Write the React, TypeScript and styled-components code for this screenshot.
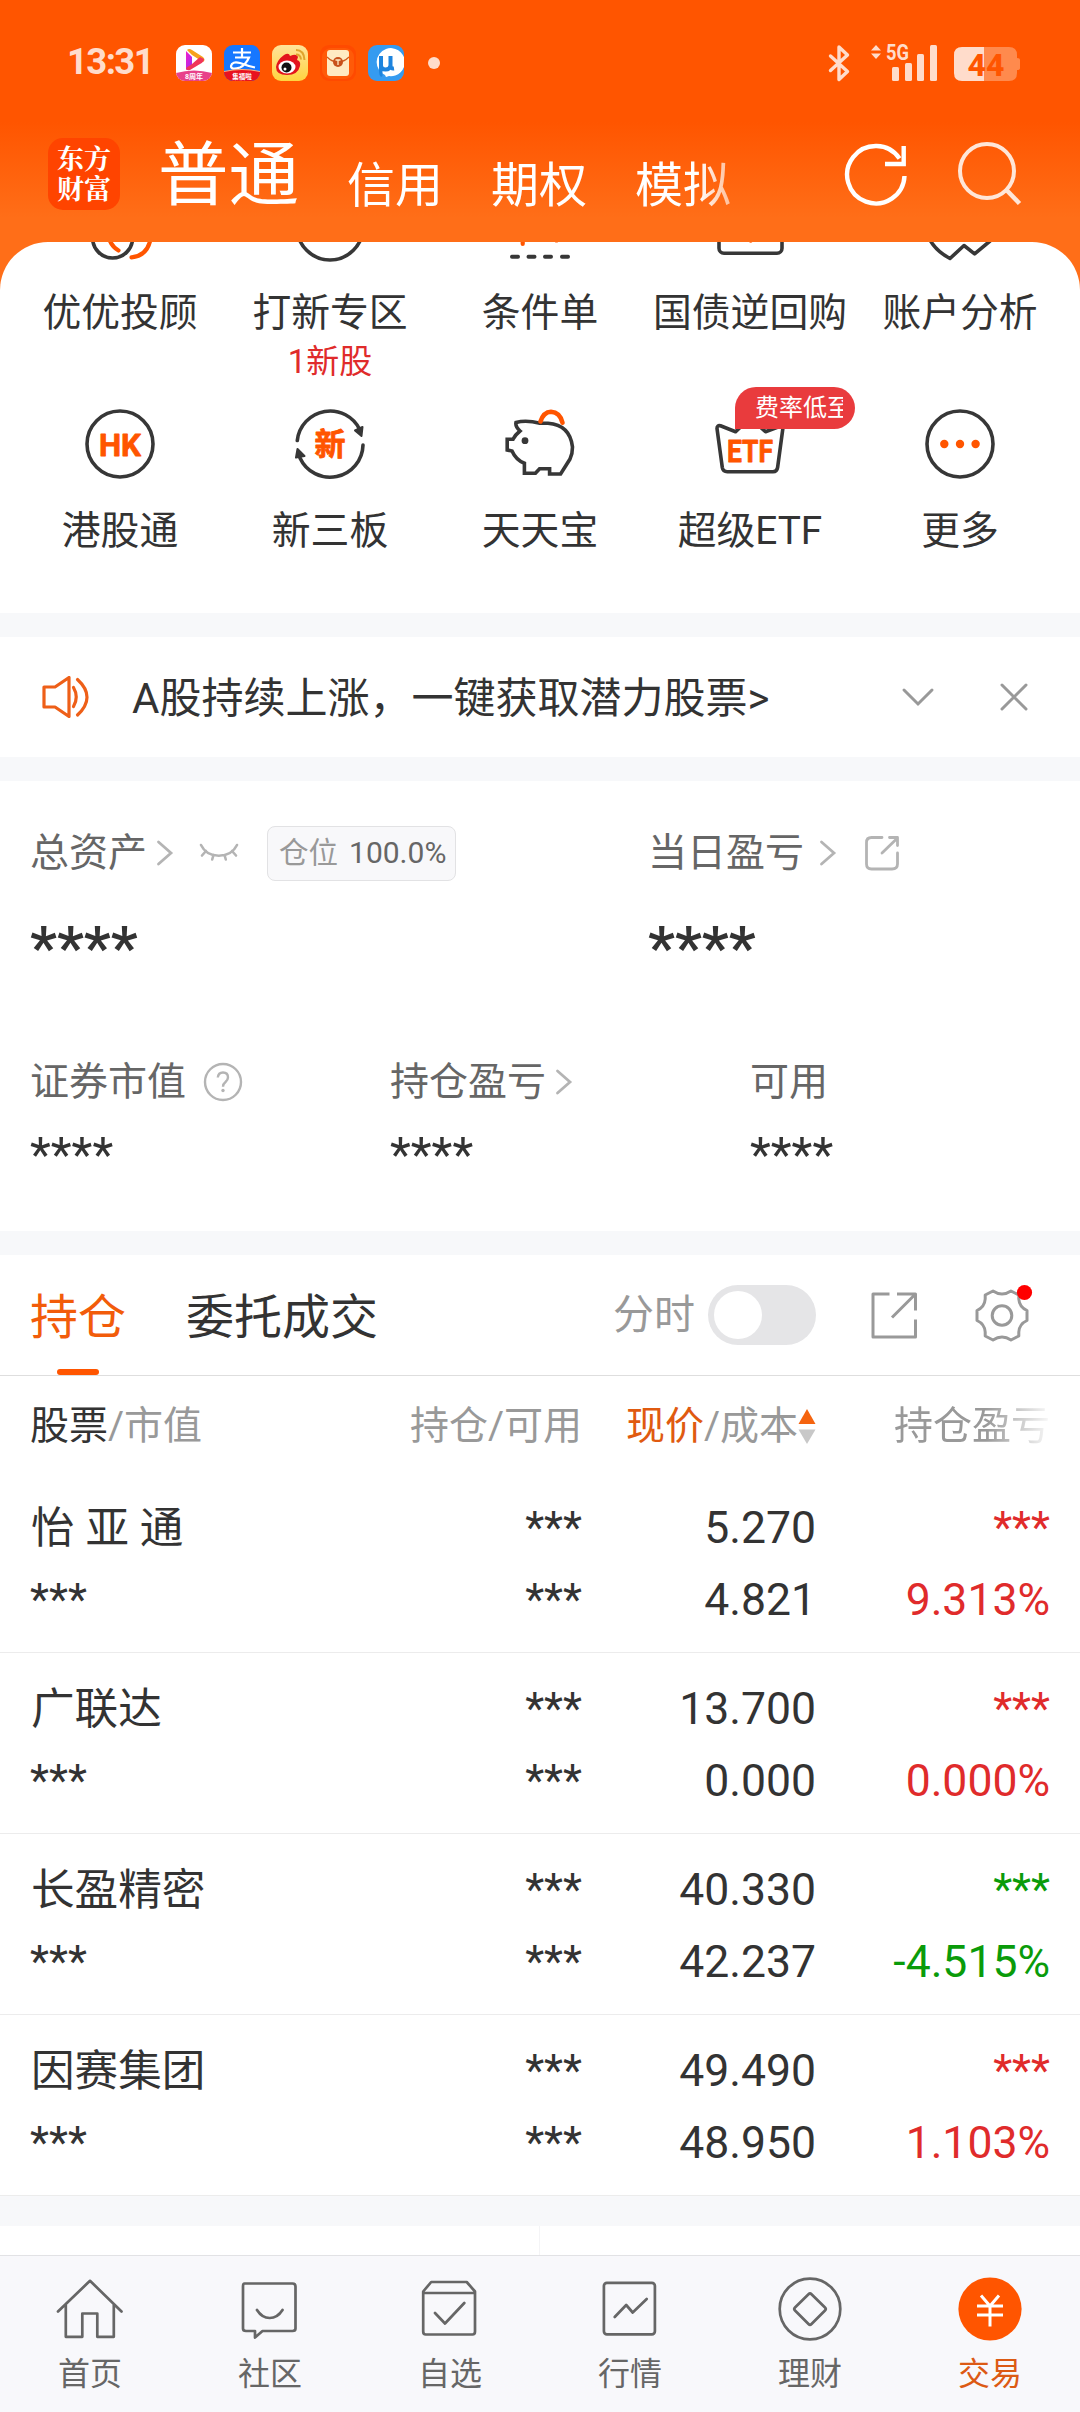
import React from 'react';
import styled, { createGlobalStyle, css } from 'styled-components';

const ORANGE = '#ff5500';
const INK = '#333333';
const RED = '#e02b2b';
const GREEN = '#0a9b0a';
const BAND = '#f7f8fa';

const GlobalStyle = createGlobalStyle`
  *, *::before, *::after { box-sizing: border-box; }
  body {
    margin: 0;
    background: #fff;
    color: ${INK};
    font-family: Roboto, "Noto Sans CJK SC", sans-serif;
    font-weight: 370;
  }
  svg { display: block; flex: none; }
`;

const Screen = styled.div`
  width: 1080px;
  height: 2412px;
  overflow: hidden;
  display: flex;
  flex-direction: column;
  background: #ff6e18;
`;

/* ---------- header ---------- */
const Header = styled.header`
  height: 242px;
  flex: none;
  background: linear-gradient(#ff5500 0, #ff5500 122px, #ff6e18 218px, #ff6e18 242px);
`;

const StatusBar = styled.div`
  height: 125px;
  padding: 1px 60px 0 67px;
  display: flex;
  align-items: center;
  color: #ffdccb;
`;

const Clock = styled.span`
  width: 109px;
  font-size: 36.5px;
  line-height: 40px;
  padding-bottom: 2px;
  font-weight: 700;
  letter-spacing: -1.6px;
  white-space: nowrap;
`;

const AppIcons = styled.div`
  display: flex;
  gap: 12px;
`;

const Dot = styled.span`
  width: 12px;
  height: 12px;
  margin-left: 24px;
  border-radius: 50%;
  background: currentColor;
`;

const StatusRight = styled.div`
  margin-left: auto;
  display: flex;
  align-items: center;
`;

const TitleBar = styled.div`
  height: 117px;
  padding-left: 48px;
  padding-right: 58px;
  display: flex;
  align-items: flex-start;
`;

const Logo = styled.div`
  width: 72px;
  height: 72px;
  margin-top: 13px;
  border-radius: 15px;
  background: #ff4400;
  color: #fff;
  padding: 5px 0 0 9px;
  font-size: 27px;
  line-height: 30px;
  font-weight: 700;
  font-family: "Noto Serif CJK SC", "Noto Sans CJK SC", sans-serif;
  white-space: pre-line;
`;

const MarketTabs = styled.nav`
  width: 578px;
  margin-left: 38px;
  display: flex;
  align-items: flex-start;
  gap: 48px;
  overflow: hidden;
  white-space: nowrap;
  color: #fff;
  mask-image: linear-gradient(90deg, #000 540px, transparent 616px);
`;

const MarketTab = styled.span<{ $active?: boolean }>`
  font-size: ${p => (p.$active ? 70.5 : 48)}px;
  line-height: ${p => (p.$active ? 103 : 122)}px;
`;

const HeaderActions = styled.div`
  margin-left: auto;
  margin-top: 14px;
  display: flex;
  gap: 47px;
`;

/* ---------- quick entries ---------- */
const Panel = styled.main`
  flex: 1;
  min-height: 0;
  overflow: hidden;
  background: #fff;
  border-radius: 48px 48px 0 0;
  display: flex;
  flex-direction: column;
`;

const EntryGrid = styled.section`
  height: 423px;
  flex: none;
  margin-top: -52px;
  padding: 0 15px;
  display: grid;
  grid-template-columns: repeat(5, 210px);
  grid-template-rows: 218px 205px;
`;

const Entry = styled.div`
  position: relative;
  display: flex;
  flex-direction: column;
  align-items: center;
`;

const EntryLabel = styled.span`
  margin-top: 25px;
  font-size: 38.8px;
  line-height: 52px;
  white-space: nowrap;
`;

const EntryNote = styled.span`
  font-size: 33px;
  line-height: 46px;
  color: ${RED};
`;

const PromoBadge = styled.span`
  position: absolute;
  left: 90px;
  top: -21px;
  width: 120px;
  height: 42px;
  padding: 0 12px 0 20px;
  border-radius: 21px 21px 21px 0;
  background: #e93b3d;
  color: #fff;
  font-size: 24px;
  line-height: 43px;
`;

const PromoText = styled.span`
  display: block;
  overflow: hidden;
  white-space: nowrap;
`;

const Band = styled.div<{ $h?: number }>`
  height: ${p => p.$h ?? 24}px;
  flex: none;
  background: ${BAND};
`;

/* ---------- notice ---------- */
const Notice = styled.section`
  height: 120px;
  flex: none;
  padding: 0 52px 0 42px;
  display: flex;
  align-items: center;
  font-size: 42px;
  white-space: nowrap;
`;

const NoticeText = styled.span`
  flex: 1;
  margin-left: 41px;
  padding-top: 4px;
  line-height: 60px;
`;

/* ---------- assets ---------- */
const Assets = styled.section`
  height: 450px;
  flex: none;
  padding: 45px 30px 0;
  color: #666;
`;

const SummaryRow = styled.div`
  display: grid;
  grid-template-columns: 618px 1fr;
  height: 229px;
`;

const DetailRow = styled.div`
  display: grid;
  grid-template-columns: 360px 360px 1fr;
`;

const Caption = styled.div`
  height: 54px;
  display: flex;
  align-items: center;
  font-size: 39px;
  line-height: 54px;
  white-space: nowrap;
`;

const Gap = styled.span<{ $w: number }>`
  width: ${p => p.$w}px;
  flex: none;
`;

const Masked = styled.div<{ $big?: boolean }>`
  color: ${INK};
  ${p =>
    p.$big
      ? css`
          font-size: 60px;
          font-weight: 600;
          line-height: 70px;
          margin-top: 33px;
        `
      : css`
          font-size: 48.3px;
          font-weight: 450;
          line-height: 56px;
          margin-top: 18px;
        `}
`;

const PositionTag = styled.span`
  height: 55px;
  width: 189px;
  padding-left: 11px;
  display: flex;
  align-items: center;
  gap: 11px;
  border: 1px solid #e2e2e4;
  border-radius: 8px;
  background: #f8f8fa;
  font-size: 29.5px;
  color: #999;
`;

const TagValue = styled.span`
  color: #666;
  font-size: 30px;
  font-weight: 400;
`;

/* ---------- holdings ---------- */
const HoldTabs = styled.section`
  height: 121px;
  flex: none;
  padding: 0 47px 0 30px;
  display: flex;
  align-items: center;
  border-bottom: 1px solid #dedede;
`;

const HoldTab = styled.span<{ $active?: boolean }>`
  position: relative;
  height: 120px;
  margin-right: 60px;
  font-size: 48px;
  line-height: 126px;
  color: ${p => (p.$active ? '#f25c0a' : INK)};
  ${p =>
    p.$active &&
    css`
      &::after {
        content: '';
        position: absolute;
        left: 27px;
        bottom: 0;
        width: 42px;
        height: 6px;
        border-radius: 3px;
        background: ${ORANGE};
      }
    `}
`;

const SwitchLabel = styled.span`
  margin-left: auto;
  margin-right: 13px;
  font-size: 41px;
  line-height: 56px;
  padding-bottom: 1px;
  color: #999;
`;

const Switch = styled.span`
  width: 108px;
  height: 60px;
  padding: 6px;
  border-radius: 30px;
  background: #e5e5e7;
  &::before {
    content: '';
    display: block;
    width: 48px;
    height: 48px;
    border-radius: 50%;
    background: #fff;
  }
`;

const columns = css`
  display: grid;
  grid-template-columns: 300px 252px 234px 234px;
  padding: 0 30px;
`;

const ColumnHead = styled.div`
  ${columns}
  height: 96px;
  flex: none;
  font-size: 39px;
  line-height: 100px;
  color: #999;
  white-space: nowrap;
`;

const HeadCell = styled.span<{ $right?: boolean; $fade?: boolean }>`
  display: flex;
  align-items: center;
  justify-content: ${p => (p.$right ? 'flex-end' : 'flex-start')};
  ${p =>
    p.$fade &&
    css`
      mask-image: linear-gradient(90deg, #000 170px, transparent 238px);
    `}
`;

const Strong = styled.span<{ $accent?: boolean }>`
  color: ${p => (p.$accent ? '#e05a10' : INK)};
`;

const HoldRow = styled.div`
  ${columns}
  height: 181px;
  flex: none;
  grid-template-rows: 72px 72px;
  align-content: start;
  padding-top: 20px;
  border-bottom: 1px solid #ececec;
  line-height: 72px;
  white-space: nowrap;
`;

const Cell = styled.span<{ $color?: string; $left?: boolean; $number?: boolean }>`
  font-size: ${p => (p.$number ? 44.5 : 44)}px;
  font-weight: ${p => (p.$number ? 380 : 420)};
  text-align: ${p => (p.$left ? 'left' : 'right')};
  color: ${p => p.$color ?? INK};
`;

const StockName = styled(Cell)`
  padding-left: 1px;
  font-size: 43.6px;
  line-height: 74px;
  font-weight: 370;
`;

const SplitRow = styled.div`
  flex: 1;
  display: grid;
  grid-template-columns: 1fr 1fr;
  & > span:first-child { border-right: 1px solid #f4f4f6; }
`;

/* ---------- bottom nav ---------- */
const BottomNav = styled.nav`
  height: 157px;
  flex: none;
  border-top: 1px solid #e2e2e5;
  background: #f8f8fb;
  display: grid;
  grid-template-columns: repeat(6, 180px);
`;

const NavItem = styled.div<{ $active?: boolean }>`
  padding-top: 17px;
  display: flex;
  flex-direction: column;
  align-items: center;
  font-size: 32px;
  line-height: 44px;
  color: ${p => (p.$active ? '#dc5a14' : '#666')};
`;

const NavLabel = styled.span`
  margin-top: 7px;
`;

/* ---------- drawings ---------- */
const iconFont = 'Roboto, "Noto Sans CJK SC", sans-serif';

const VideoApp = () => (
  <svg width="36" height="36" viewBox="0 0 36 36">
    <defs>
      <linearGradient id="vg" x1="0" y1="0" x2="1" y2="1">
        <stop offset="0" stopColor="#f51fc6" />
        <stop offset="1" stopColor="#9a2cf5" />
      </linearGradient>
      <clipPath id="vc"><rect width="36" height="36" rx="9" /></clipPath>
    </defs>
    <g clipPath="url(#vc)">
      <rect width="36" height="36" fill="#fff" />
      <path d="M10 6l6 6v9l-6 4z" fill="url(#vg)" />
      <path d="M11 5q2-2 5 0l11 7q3 3 0 5L16 10z" fill="#f7a11b" />
      <path d="M28 14q0 3-4 5l-10 6q-4 1-4-2l6-4 8-7z" fill="#f0355a" />
      <path d="M0 28q18-5 36 0v8H0z" fill="#e8418a" />
      <text x="18" y="34" textAnchor="middle" fontSize="7" fontWeight="700" fill="#fff" fontFamily={iconFont}>8周年</text>
    </g>
  </svg>
);

const PayApp = () => (
  <svg width="36" height="36" viewBox="0 0 36 36">
    <defs><clipPath id="pc"><rect width="36" height="36" rx="9" /></clipPath></defs>
    <g clipPath="url(#pc)">
      <rect width="36" height="36" fill="#1677ff" />
      <g fill="none" stroke="#fff" strokeWidth="2.200">
        <path d="M9 7.500h18M18 3v9M11 12.500h14q-3 7-9 10-9 3-9-1.500 1-5 9-3 8 3 15 4.500" />
      </g>
      <path d="M0 26.500q18-4 36 0v10H0z" fill="#e8121f" />
      <path d="M0 26.500q18-4 36 0" fill="none" stroke="#ffb27a" />
      <text x="18" y="33.500" textAnchor="middle" fontSize="6.500" fontWeight="700" fill="#fff" fontFamily={iconFont}>集福啦</text>
    </g>
  </svg>
);

const WeiboApp = () => (
  <svg width="36" height="36" viewBox="0 0 36 36">
    <defs>
      <linearGradient id="wg" x1="0" y1="0" x2="0" y2="1">
        <stop offset="0" stopColor="#ffe39a" />
        <stop offset="1" stopColor="#ffd43f" />
      </linearGradient>
    </defs>
    <rect width="36" height="36" rx="9" fill="url(#wg)" />
    <path d="M4 22q1-7 8-12 5-3 6 1 7-3 8 1l-1 3q4 1 3 6-2 9-13 9T4 22z" fill="#e3141c" />
    <ellipse cx="15" cy="22" rx="8.500" ry="6.500" fill="#fff" />
    <circle cx="14.500" cy="22.500" r="5" fill="#111" />
    <circle cx="13" cy="24" r="1.500" fill="#fff" />
    <g fill="none" stroke="#e0a32e" strokeWidth="2">
      <path d="M24 5q8 0 8.500 10M24 9.500q4.500 0 5 5" />
    </g>
  </svg>
);

const EnvelopeApp = () => (
  <svg width="36" height="36" viewBox="0 0 36 36">
    <rect width="36" height="36" rx="9" fill="#ff4a00" />
    <rect x="2" y="3" width="32" height="31" rx="9" fill="#ff5a08" />
    <rect x="7" y="5" width="22" height="26" rx="3" fill="#ffeac2" />
    <path d="M7 12q5 5 11 5t11-5" fill="none" stroke="#cf5a1c" strokeWidth="1.200" />
    <circle cx="18" cy="17" r="5" fill="#c8501a" />
    <path d="M15.500 15h5M18 15v5" stroke="#ffeac2" strokeWidth="1.300" />
  </svg>
);

const TorrentApp = () => (
  <svg width="36" height="36" viewBox="0 0 36 36">
    <rect width="36" height="36" rx="9" fill="#359bf0" />
    <path d="M18 4a14 14 0 1 1 3 27l-3 1-1-2A14 14 0 0 1 18 4z" fill="#fff" />
    <path d="M13 11v9.500q0 4 4.500 4t5-4V11M22.500 20q0 4 3.500 3.500" fill="none" stroke="#1d84de" strokeWidth="4" />
    <path d="M11 11v16q0 3 2 5l1.500-1V11z" fill="#1d84de" />
  </svg>
);

const StatusGlyphs = () => (
  <svg width="192" height="48" viewBox="828 38 192 48">
    <path d="M830.500 55l17 15.500-8.500 8V46l8.500 8-17 15.500" fill="none" stroke="#ffdccb" strokeWidth="3.400" strokeLinejoin="round" strokeLinecap="round" />
    <g fill="#ffdccb">
      <path d="M871 49.500l5-5.500 5 5.500zM871 52.500l5 5.500 5-5.500z" />
      <text x="886" y="59" fontSize="21.500" fontWeight="700" textLength="23" lengthAdjust="spacingAndGlyphs" fontFamily={iconFont}>5G</text>
      <rect x="892" y="66" width="7" height="14" rx="1.500" />
      <rect x="905" y="62" width="7" height="18" rx="1.500" />
      <rect x="917" y="53" width="7" height="27" rx="1.500" />
      <rect x="930" y="44" width="7" height="36" rx="1.500" />
    </g>
    <path d="M984 46h25q8 0 8 8v3q3 0 3 2v8q0 2-3 2v3q0 8-8 8h-25z" fill="#ff8a4d" />
    <path d="M984 46h-22q-8 0-8 8v18q0 8 8 8h22z" fill="#ffdccb" />
    <text x="986" y="74.500" textAnchor="middle" fontSize="32" fontWeight="800" fill={ORANGE} fontFamily={iconFont}>44</text>
  </svg>
);

const RefreshIcon = () => (
  <svg width="66" height="68" viewBox="843 139 66 68" fill="none" stroke="#fff" strokeWidth="4.400">
    <path d="M904.500 176a28.700 28.700 0 1 1-5-17.500" />
    <path d="M885 164h18.700v-18" />
  </svg>
);

const SearchIcon = () => (
  <svg width="66" height="68" viewBox="956 139 66 68" fill="none" stroke="#ffe6d8" strokeWidth="4">
    <circle cx="987" cy="171" r="27" />
    <path d="M1006 189.500l13.500 14" strokeWidth="4.600" />
  </svg>
);

const EntryIcon = ({ children }: { children: React.ReactNode }) => (
  <svg width="72" height="72" viewBox="0 0 72 72" fill="none" stroke="#373737" strokeWidth="3.600" strokeLinecap="round" strokeLinejoin="round">
    {children}
  </svg>
);

const IconText = ({ size, y, w, children }: { size: number; y: number; w?: number; children: string }) => (
  <text x="36" y={y} textAnchor="middle" fontSize={size} fontWeight="700" fill={ORANGE} stroke={ORANGE} strokeWidth="0.800" fontFamily={iconFont} textLength={w} lengthAdjust="spacingAndGlyphs">
    {children}
  </text>
);

const entries: { label: string; note?: string; badge?: string; icon: React.ReactNode }[] = [
  {
    label: '优优投顾',
    icon: (
      <>
        <circle cx="28.600" cy="48" r="20" />
        <path d="M47.500 67.300Q63 66 66.300 50M25 48q2 8 9.500 12.500" stroke={ORANGE} strokeWidth="4.200" />
      </>
    ),
  },
  { label: '打新专区', note: '1新股', icon: <circle cx="36" cy="37" r="33" /> },
  {
    label: '条件单',
    icon: (
      <>
        <path d="M8 66.700h6M24.500 66.700h6M41 66.700h6M58 66.700h6" strokeWidth="4" />
        <path d="M18.700 30v24M52.500 30v20.500" stroke={ORANGE} strokeWidth="4.200" />
      </>
    ),
  },
  {
    label: '国债逆回购',
    icon: (
      <>
        <rect x="5" y="14" width="63" height="49.300" rx="5" />
        <path d="M36.700 30v21" stroke={ORANGE} />
      </>
    ),
  },
  {
    label: '账户分析',
    icon: <path d="M4 46q6 14 22 22.500L40 55.500l10.600 8.300L66 51" />,
  },
  {
    label: '港股通',
    icon: (
      <>
        <circle cx="36" cy="36" r="33" />
        <IconText size={32} y={47.500} w={42}>HK</IconText>
      </>
    ),
  },
  {
    label: '新三板',
    icon: (
      <>
        <path d="M3.300 32.500A33 33 0 0 1 66 22M69 37A33 33 0 0 1 6 50" />
        <path d="M61 22.500l7.500-3.500-1 9zM3.500 41l7 7-8.500 1.500z" fill="#373737" strokeWidth="2" />
        <IconText size={31} y={47}>新</IconText>
      </>
    ),
  },
  {
    label: '天天宝',
    icon: (
      <>
        <path d="M36 15.300Q22 11.500 12 14.500q-1 4 4 8.500-5 4-7 8.300H3.200V42L8 43q4 9 12.400 12.300v10h11l4.200-4.600h10V66h11L66 51q2.500-5 2.500-12Q66 17 44 15.300z" strokeLinejoin="miter" />
        <path d="M36.500 13.500q3-9.500 10.500-9.800 9 .5 11.500 11" stroke={ORANGE} strokeWidth="4.600" />
        <circle cx="21" cy="32.700" r="3.400" fill="#373737" stroke="none" />
      </>
    ),
  },
  {
    label: '超级ETF',
    badge: '费率低至',
    icon: (
      <>
        <path d="M21.600 23.700L6.500 17.800Q3 17 3 20.500l5.300 39q.7 4.200 5 4.200H59q4 0 4.600-4.200l5.400-40q0-2-3-1.200L51.500 23.700 36 10z" />
        <IconText size={32} y={53.500} w={46}>ETF</IconText>
      </>
    ),
  },
  {
    label: '更多',
    icon: (
      <>
        <circle cx="36" cy="36" r="33" />
        <g fill={ORANGE} stroke="none">
          <circle cx="20.300" cy="36" r="4.200" />
          <circle cx="36" cy="36" r="4.200" />
          <circle cx="51.600" cy="36" r="4.200" />
        </g>
      </>
    ),
  },
];

const SpeakerIcon = () => (
  <svg width="49" height="42" viewBox="42 676 49 42" fill="none" stroke="#ee5f18" strokeWidth="3.200" strokeLinejoin="round" strokeLinecap="round">
    <path d="M44 687h11l14-9.500v39L55 707H44zM69 678v38" />
    <path d="M73.500 687.500q5.500 9.500 0 19M77.500 679.500q19 17.500 0 35.500" />
  </svg>
);

const Chevron = () => (
  <svg width="18" height="28" viewBox="0 0 18 28" fill="none" stroke="#b4b4b4" strokeWidth="2.800" strokeLinecap="round">
    <path d="M2.500 3L15 14 2.500 25" />
  </svg>
);

const ClosedEye = () => (
  <svg width="40" height="22" viewBox="199 845 40 22" fill="none" stroke="#b4b4b4" strokeWidth="2.600" strokeLinecap="round">
    <path d="M201 848q5 10.500 17.800 10.800Q232 858.500 237 848M206 854l-4 4.500M213.500 858l-1.300 4.500M224.500 858l1.300 4.500M232 854l4 4.500" />
  </svg>
);

const ShareRound = () => (
  <svg width="36" height="36" viewBox="864 835 36 36" fill="none" stroke="#b4b4b4" strokeWidth="2.800" strokeLinecap="round" strokeLinejoin="round">
    <path d="M882 837.500h-10.500q-5 0-5 5V864q0 5 5 5H892q5.500 0 5.500-5v-11M889.500 837.500h8v8M897 838.500L882 853" />
  </svg>
);

const HelpIcon = () => (
  <svg width="40" height="40" viewBox="0 0 40 40">
    <circle cx="20" cy="20" r="18" fill="none" stroke="#b4b4b4" strokeWidth="2.400" />
    <path d="M14.800 15.500q.5-5 5.200-5 5 0 5 4.800 0 2.500-2.500 4.700-2.500 2-2.500 4.700" fill="none" stroke="#b4b4b4" strokeWidth="2.400" />
    <circle cx="20" cy="28.500" r="1.700" fill="#b4b4b4" />
  </svg>
);

const ShareSquare = () => (
  <svg width="48" height="48" viewBox="870 1291 48 48" fill="none" stroke="#999" strokeWidth="3" strokeLinejoin="round">
    <path d="M889.500 1294H873v43h42.500v-17.500M897 1294h18.500v16.500M915 1294.500L892 1317.500" />
  </svg>
);

const GearIcon = () => (
  <svg width="60" height="62" viewBox="973 1284 60 62" fill="none" stroke="#999" strokeWidth="3" strokeLinejoin="round">
    <path d="M993 1291q9 6 18 0l7.800 4v4q.5 8 8.200 11.500v10q-7.700 3.500-8.200 11.500v4l-7.800 4q-9-6-18 0l-7.800-4v-4q-.5-8-8.200-11.500v-10q7.700-3.500 8.200-11.500v-4z" />
    <circle cx="1002" cy="1315.500" r="9.800" />
    <circle cx="1024.500" cy="1292.500" r="7.600" fill="#f00" stroke="none" />
  </svg>
);

const SortArrows = () => (
  <svg width="18" height="36" viewBox="0 0 18 36">
    <path d="M9 1l8.500 15H.5z" fill="#f5640f" />
    <path d="M9 36L.5 21.500h17z" fill="#c8c8c8" />
  </svg>
);

const navItems: { label: string; active?: boolean; icon: React.ReactNode }[] = [
  {
    label: '首页',
    icon: <path d="M4 38.500L36 7.800l31.500 30.700M11.800 32v31.800h16.500V40.500h15v23.300h16.500V32" />,
  },
  {
    label: '社区',
    icon: <path d="M10.500 10.500h48q3 0 3 3v42q0 2.500-3 2.500h-30L21 64.500V58h-9q-3 0-3-2.500v-42q0-3 1.500-3zM23 37q5 8 12.700 8T48.500 37" />,
  },
  {
    label: '自选',
    icon: <path d="M9.200 18.500L17.200 9h35.500l8.300 9.500v40q0 3-2.500 3H11.700q-2.500 0-2.500-3zM9.200 20H61M21 40l10 10.500L50.300 30" />,
  },
  {
    label: '行情',
    icon: (
      <>
        <rect x="9.900" y="9.800" width="51" height="51.500" rx="3" />
        <path d="M20.700 44l11.500-12 6.500 7.500L52.700 26" />
      </>
    ),
  },
  {
    label: '理财',
    icon: (
      <>
        <circle cx="36" cy="36" r="30.300" />
        <path d="M34.500 21.300q1.500-1.500 3 0L51 34.500q1.500 1.500 0 3L37.500 51q-1.500 1.500-3 0L21 37.500q-1.500-1.500 0-3z" />
      </>
    ),
  },
  {
    label: '交易',
    active: true,
    icon: (
      <>
        <circle cx="36" cy="36" r="31.600" fill={ORANGE} stroke="none" />
        <path d="M27 22.500l9 10.500 9-10.500M23 33h26M23 42h26M36 33v20.500" stroke="#fff" strokeWidth="3" strokeLinecap="butt" />
      </>
    ),
  },
];

const holdings = [
  { name: '怡 亚 通', price: '5.270', cost: '4.821', pct: '9.313%', color: RED },
  { name: '广联达', price: '13.700', cost: '0.000', pct: '0.000%', color: RED },
  { name: '长盈精密', price: '40.330', cost: '42.237', pct: '-4.515%', color: GREEN },
  { name: '因赛集团', price: '49.490', cost: '48.950', pct: '1.103%', color: RED },
];

export default function App() {
  return (
    <>
      <GlobalStyle />
      <Screen>
        <Header>
          <StatusBar>
            <Clock>13:31</Clock>
            <AppIcons>
              <VideoApp />
              <PayApp />
              <WeiboApp />
              <EnvelopeApp />
              <TorrentApp />
            </AppIcons>
            <Dot />
            <StatusRight><StatusGlyphs /></StatusRight>
          </StatusBar>
          <TitleBar>
            <Logo>{'东方\n财富'}</Logo>
            <MarketTabs>
              <MarketTab $active>普通</MarketTab>
              <MarketTab>信用</MarketTab>
              <MarketTab>期权</MarketTab>
              <MarketTab>模拟</MarketTab>
            </MarketTabs>
            <HeaderActions>
              <RefreshIcon />
              <SearchIcon />
            </HeaderActions>
          </TitleBar>
        </Header>

        <Panel>
          <EntryGrid>
            {entries.map(e => (
              <Entry key={e.label}>
                <EntryIcon>{e.icon}</EntryIcon>
                {e.badge && <PromoBadge><PromoText>{e.badge}</PromoText></PromoBadge>}
                <EntryLabel>{e.label}</EntryLabel>
                {e.note && <EntryNote>{e.note}</EntryNote>}
              </Entry>
            ))}
          </EntryGrid>

          <Band />
          <Notice>
            <SpeakerIcon />
            <NoticeText>A股持续上涨，一键获取潜力股票&gt;</NoticeText>
            <svg width="34" height="22" viewBox="0 0 34 22" fill="none" stroke="#999" strokeWidth="3" strokeLinecap="round">
              <path d="M3 4l14 14L31 4" />
            </svg>
            <Gap $w={65} />
            <svg width="28" height="28" viewBox="0 0 28 28" fill="none" stroke="#999" strokeWidth="3" strokeLinecap="round">
              <path d="M2 2l24 24M26 2L2 26" />
            </svg>
          </Notice>
          <Band />

          <Assets>
            <SummaryRow>
              <div>
                <Caption>
                  总资产<Gap $w={9} /><Chevron /><Gap $w={25} /><ClosedEye /><Gap $w={28} />
                  <PositionTag>仓位<TagValue>100.0%</TagValue></PositionTag>
                </Caption>
                <Masked $big>****</Masked>
              </div>
              <div>
                <Caption>
                  当日盈亏<Gap $w={15} /><Chevron /><Gap $w={27} /><ShareRound />
                </Caption>
                <Masked $big>****</Masked>
              </div>
            </SummaryRow>
            <DetailRow>
              <div>
                <Caption>证券市值<Gap $w={17} /><HelpIcon /></Caption>
                <Masked>****</Masked>
              </div>
              <div>
                <Caption>持仓盈亏<Gap $w={9} /><Chevron /></Caption>
                <Masked>****</Masked>
              </div>
              <div>
                <Caption>可用</Caption>
                <Masked>****</Masked>
              </div>
            </DetailRow>
          </Assets>

          <Band />
          <HoldTabs>
            <HoldTab $active>持仓</HoldTab>
            <HoldTab>委托成交</HoldTab>
            <SwitchLabel>分时</SwitchLabel>
            <Switch />
            <Gap $w={54} />
            <ShareSquare />
            <Gap $w={55} />
            <GearIcon />
          </HoldTabs>

          <ColumnHead>
            <HeadCell><Strong>股票</Strong>/市值</HeadCell>
            <HeadCell $right>持仓/可用</HeadCell>
            <HeadCell $right><Strong $accent>现价</Strong>/成本<SortArrows /></HeadCell>
            <HeadCell $right $fade>持仓盈亏</HeadCell>
          </ColumnHead>

          {holdings.map(h => (
            <HoldRow key={h.name}>
              <StockName $left>{h.name}</StockName>
              <Cell>***</Cell>
              <Cell $number>{h.price}</Cell>
              <Cell $color={h.color}>***</Cell>
              <Cell $left>***</Cell>
              <Cell>***</Cell>
              <Cell $number>{h.cost}</Cell>
              <Cell $number $color={h.color}>{h.pct}</Cell>
            </HoldRow>
          ))}

          <Band $h={30} />
          <SplitRow><span /><span /></SplitRow>

          <BottomNav>
            {navItems.map(n => (
              <NavItem key={n.label} $active={n.active}>
                <svg width="72" height="72" viewBox="0 0 72 72" fill="none" stroke="#666" strokeWidth="2.700" strokeLinejoin="round" strokeLinecap="round">
                  {n.icon}
                </svg>
                <NavLabel>{n.label}</NavLabel>
              </NavItem>
            ))}
          </BottomNav>
        </Panel>
      </Screen>
    </>
  );
}
